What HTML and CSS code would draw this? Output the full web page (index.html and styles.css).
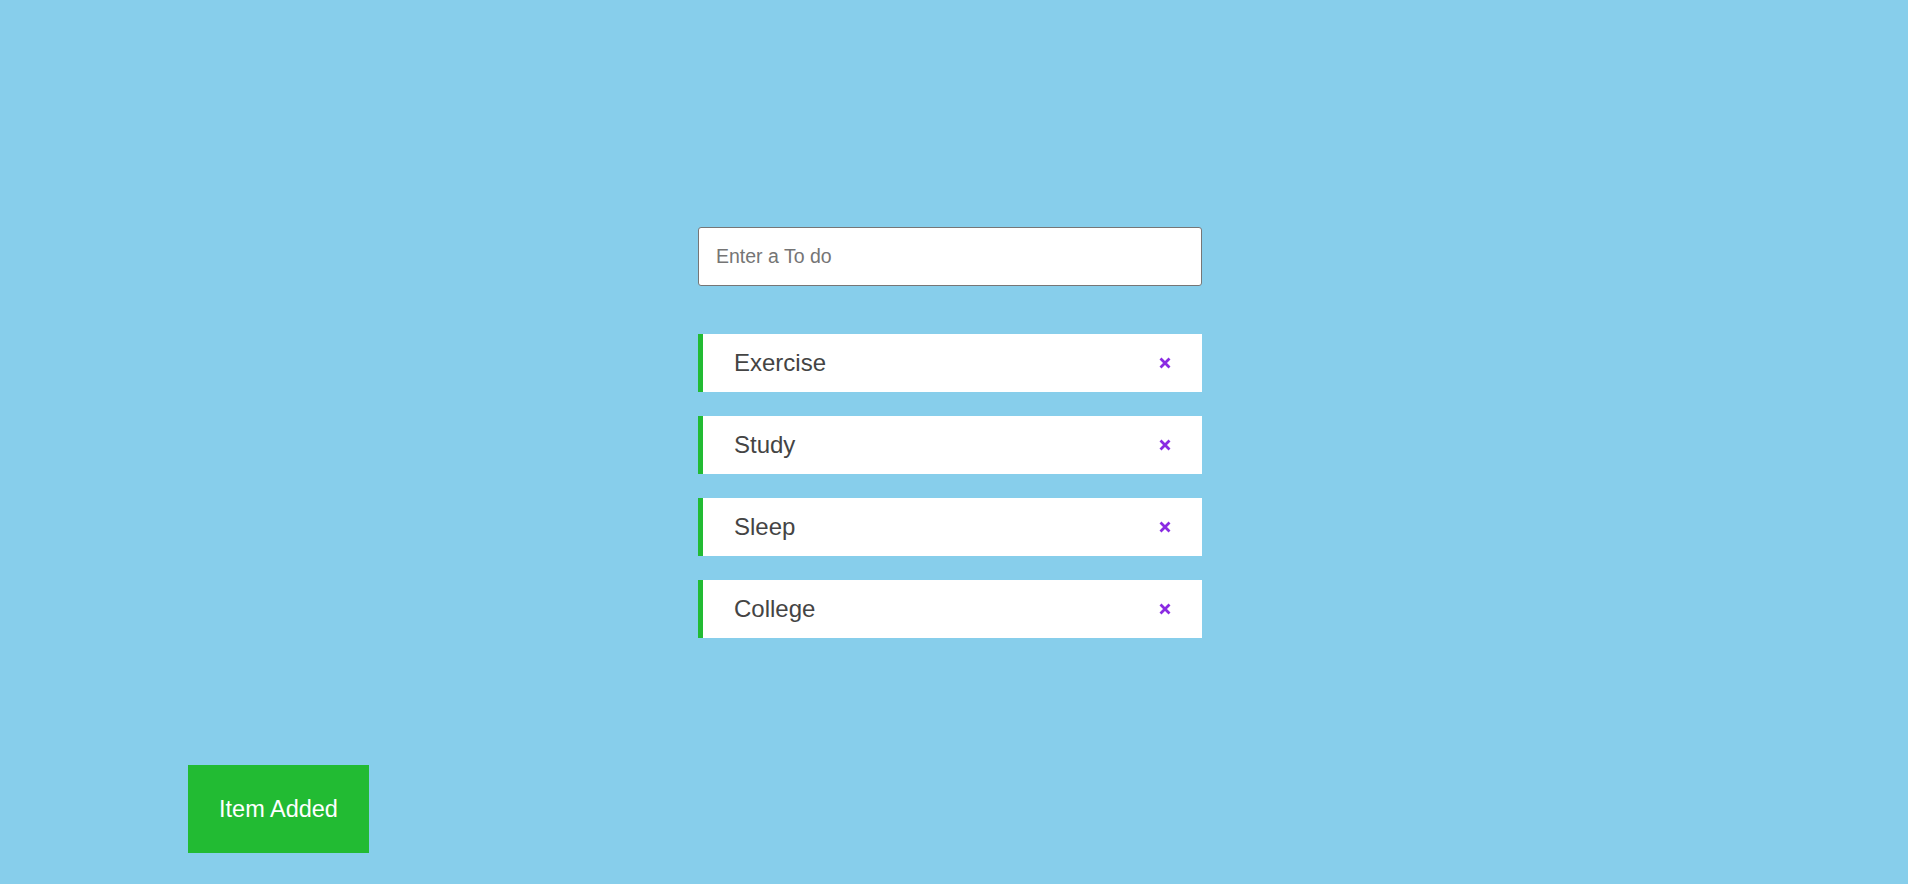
FILE: index.html
```html
<!DOCTYPE html>
<html lang="en">
<head>
<meta charset="utf-8">
<title>To do</title>
<link rel="stylesheet" href="styles.css">
</head>
<body>
<main class="page">
  <section class="todo">
    <input class="todo-input" type="text" placeholder="Enter a To do" autofocus>
    <ul class="todo-list">
      <li class="todo-item"><span class="todo-text">Exercise</span><button class="todo-delete" aria-label="Delete"><svg viewBox="0 0 12 12" width="12" height="12"><path d="M1.5 1.5 L10.5 10.5 M10.5 1.5 L1.5 10.5" stroke="#8a2be2" stroke-width="2.8"/></svg></button></li>
      <li class="todo-item"><span class="todo-text">Study</span><button class="todo-delete" aria-label="Delete"><svg viewBox="0 0 12 12" width="12" height="12"><path d="M1.5 1.5 L10.5 10.5 M10.5 1.5 L1.5 10.5" stroke="#8a2be2" stroke-width="2.8"/></svg></button></li>
      <li class="todo-item"><span class="todo-text">Sleep</span><button class="todo-delete" aria-label="Delete"><svg viewBox="0 0 12 12" width="12" height="12"><path d="M1.5 1.5 L10.5 10.5 M10.5 1.5 L1.5 10.5" stroke="#8a2be2" stroke-width="2.8"/></svg></button></li>
      <li class="todo-item"><span class="todo-text">College</span><button class="todo-delete" aria-label="Delete"><svg viewBox="0 0 12 12" width="12" height="12"><path d="M1.5 1.5 L10.5 10.5 M10.5 1.5 L1.5 10.5" stroke="#8a2be2" stroke-width="2.8"/></svg></button></li>
    </ul>
  </section>
</main>
<div class="toast">Item Added</div>
</body>
</html>
```

FILE: styles.css
```css
* { box-sizing: border-box; }

html, body {
  margin: 0;
  padding: 0;
  height: 100%;
}

body {
  background: #87ceeb;
  font-family: "Liberation Sans", Arial, sans-serif;
  color: #444;
  overflow: hidden;
}

.page {
  display: flex;
  justify-content: center;
  padding: 227px 8px 0 0;
}

.todo {
  width: 504px;
  display: flex;
  flex-direction: column;
}

.todo-input {
  width: 100%;
  height: 59px;
  border: 1px solid #767676;
  border-radius: 3px;
  padding: 0 17px;
  font-family: "Liberation Sans", Arial, sans-serif;
  font-size: 19.5px;
  color: #333;
  background: #fff;
  outline: none;
}

.todo-input::placeholder {
  color: #757575;
}

.todo-list {
  list-style: none;
  margin: 48px 0 0;
  padding: 0;
  display: flex;
  flex-direction: column;
  gap: 24px;
}

.todo-item {
  height: 58px;
  background: #fff;
  border-left: 5px solid #22bb33;
  display: flex;
  align-items: center;
  justify-content: space-between;
  padding: 0 31px 0 31px;
}

.todo-text {
  font-size: 24px;
  color: #444;
}

.todo-delete {
  border: 0;
  background: none;
  padding: 0;
  width: 12px;
  height: 12px;
  display: flex;
  align-items: center;
  justify-content: center;
  cursor: pointer;
}

.todo-delete svg { display: block; }

.toast {
  position: absolute;
  left: 188px;
  bottom: 31px;
  width: 181px;
  height: 88px;
  background: #22bb33;
  color: #fff;
  font-size: 23.5px;
  display: flex;
  align-items: center;
  justify-content: center;
}
```
